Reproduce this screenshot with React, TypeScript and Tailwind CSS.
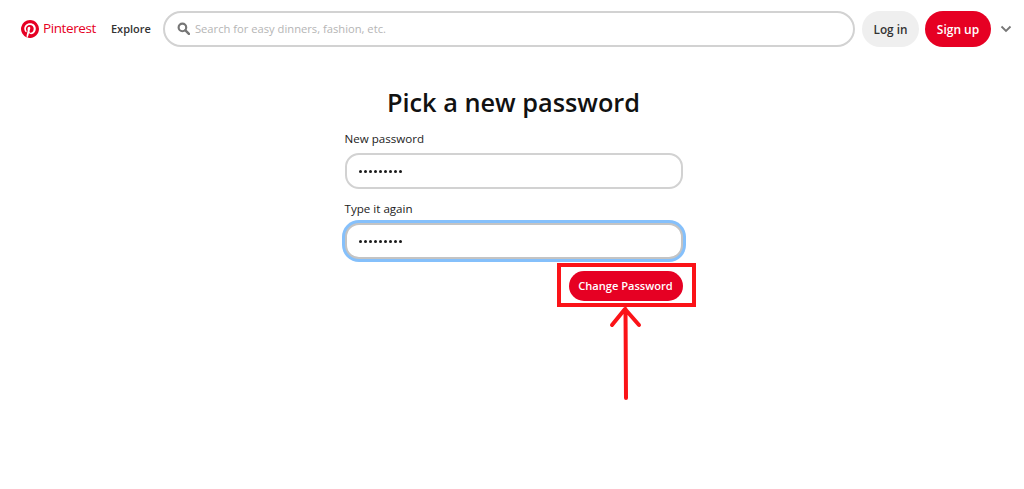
import React from "react";

const font = { fontFamily: '"Open Sans", "Noto Sans", sans-serif' };

function Logo() {
  return (
    <svg width="18" height="18" viewBox="0 0 24 24" className="shrink-0">
      <path
        fill="#e60023"
        d="M12 0a12 12 0 0 0-4.37 23.17c-.1-.95-.2-2.4.04-3.44l1.4-5.96s-.36-.72-.36-1.78c0-1.66.97-2.9 2.17-2.9 1.02 0 1.52.77 1.52 1.7 0 1.03-.66 2.57-1 4-.28 1.2.6 2.17 1.78 2.17 2.13 0 3.77-2.25 3.77-5.5 0-2.87-2.06-4.88-5-4.88-3.41 0-5.41 2.56-5.41 5.2 0 1.03.4 2.14.9 2.74.1.12.11.22.08.34l-.33 1.36c-.05.22-.18.27-.41.16-1.5-.7-2.43-2.89-2.43-4.65 0-3.78 2.75-7.26 7.93-7.26 4.17 0 7.4 2.97 7.4 6.93 0 4.14-2.6 7.46-6.22 7.46-1.21 0-2.36-.63-2.75-1.38l-.75 2.85c-.27 1.04-1 2.35-1.49 3.15A12 12 0 1 0 12 0z"
      />
    </svg>
  );
}

function Field({ label, focused }: { label: string; focused?: boolean }) {
  return (
    <div className="flex flex-col">
      <label className="text-[11.6px] leading-[16px] text-[#222] mb-[6px] mt-[1px]">{label}</label>
      <div
        className={
          focused
            ? "h-[36px] rounded-[14px] border-2 border-[#c4c4c4] bg-white flex items-center pl-[12px] shadow-[0_0_0_3px_#85c0fb]"
            : "h-[36px] rounded-[14px] border-2 border-[#d2d2d2] bg-white flex items-center pl-[12px]"
        }
      >
        <span className="flex gap-[2px]">
          {Array.from({ length: 9 }).map((_, i) => (
            <span key={i} className="w-[3px] h-[3px] rounded-full bg-[#1a1a1a]" />
          ))}
        </span>
      </div>
    </div>
  );
}

export default function App() {
  return (
    <div className="relative w-[1024px] h-[489px] bg-white overflow-hidden" style={font}>
      <header className="flex items-center h-[57px] pl-[21px] pr-[12px]">
        <div className="flex items-center gap-[4px]">
          <Logo />
          <span className="text-[13.5px] text-[#e60023] tracking-[-0.4px]">Pinterest</span>
        </div>
        <span className="ml-[15px] mt-[2px] w-[40px] text-[11px] font-semibold text-[#333]">Explore</span>
        <div className="ml-[12px] flex-1 h-[36px] rounded-[18px] border-2 border-[#d2d2d2] flex items-center pl-[12px] gap-[5px]">
          <svg width="13" height="13" viewBox="0 0 24 24" className="shrink-0">
            <circle cx="10" cy="10" r="7" fill="none" stroke="#767676" strokeWidth="4" />
            <path d="M15.5 15.5 L22 22" stroke="#767676" strokeWidth="4.5" strokeLinecap="round" />
          </svg>
          <span className="text-[11.2px] leading-[16px] mt-[1px] text-[#b5b5b5]">
            Search for easy dinners, fashion, etc.
          </span>
        </div>
        <button className="ml-[7px] w-[57px] h-[36px] rounded-[18px] bg-[#efefef] pt-[2px] text-[11.8px] font-semibold text-[#333]">
          Log in
        </button>
        <button className="ml-[6px] w-[66px] h-[36px] rounded-[18px] bg-[#e60023] pt-[2px] text-[12px] font-semibold text-white">
          Sign up
        </button>
        <svg width="12" height="12" viewBox="0 0 12 12" className="ml-[9px]">
          <path d="M1.5 3.5 L6 8 L10.5 3.5" fill="none" stroke="#767676" strokeWidth="1.8" />
        </svg>
      </header>

      <main className="flex flex-col items-center pl-[3px]">
        <h1 className="mt-[25px] text-[25.3px] leading-[40px] font-semibold text-[#111]">Pick a new password</h1>
        <div className="w-[338px] flex flex-col mt-[8px] gap-[11px]">
          <Field label="New password" />
          <Field label="Type it again" focused />
          <div className="flex justify-end mt-[1px]">
            <button className="w-[114px] h-[30px] rounded-[15px] bg-[#e60023] text-[11.1px] font-semibold text-white">
              Change Password
            </button>
          </div>
        </div>
      </main>

      {/* Annotation overlay */}
      <div className="absolute left-[557px] top-[263px] w-[139px] h-[44px] border-4 border-[#fb1318]" />
      <svg className="absolute left-[600px] top-[300px]" width="50" height="105" viewBox="0 0 50 105">
        <path
          d="M25.5 9 L26 98 M12 25 L25 9 L39 25"
          fill="none"
          stroke="#fb1318"
          strokeWidth="4"
          strokeLinecap="round"
          strokeLinejoin="round"
        />
      </svg>
    </div>
  );
}
